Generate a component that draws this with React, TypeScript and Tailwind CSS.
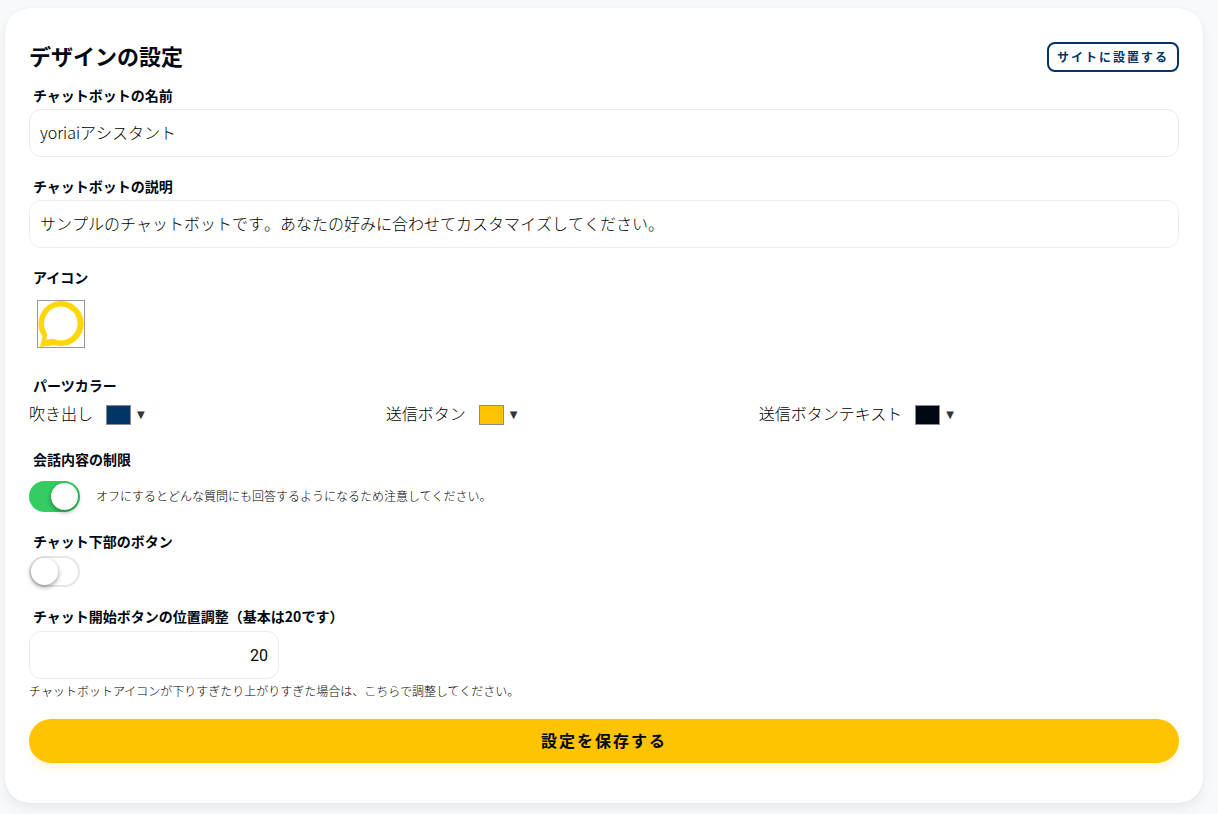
import { useState } from 'react'
import type { ReactNode } from 'react'

const FONT = "font-['Noto_Sans_CJK_JP',sans-serif]"

function Label({ htmlFor, children }: { htmlFor?: string; children: ReactNode }) {
  const className = 'mb-[5px] block pl-1 text-sm leading-[18px] font-bold'
  return htmlFor ? (
    <label htmlFor={htmlFor} className={className}>{children}</label>
  ) : (
    <p className={className}>{children}</p>
  )
}

function TextField({ id, label, initial }: { id: string; label: string; initial: string }) {
  const [value, setValue] = useState(initial)
  return (
    <div>
      <Label htmlFor={id}>{label}</Label>
      <input
        id={id}
        type="text"
        value={value}
        onChange={e => setValue(e.target.value)}
        className="block h-12 w-full rounded-xl border border-[#e9ecef] bg-white px-2.5 pb-0.5 text-base font-light text-black [font-kerning:none] outline-none focus:border-[#003566]"
      />
    </div>
  )
}

function ColorPicker({ id, label, swatch }: { id: string; label: string; swatch: string }) {
  return (
    <div className="flex flex-auto items-start gap-[13px]">
      <span id={id} className="text-base leading-4 font-light text-black">{label}</span>
      <button type="button" aria-labelledby={id} className="flex cursor-pointer items-center gap-1.5">
        <span className={`h-5 w-[25px] border border-[#8c8c8c] ${swatch}`} />
        <span className="font-['DejaVu_Sans',sans-serif] text-[10px] leading-4 text-[#333]">▼</span>
      </button>
    </div>
  )
}

function Toggle({ id, initial }: { id: string; initial: boolean }) {
  const [on, setOn] = useState(initial)
  return (
    <span className="relative inline-flex h-[31px] w-[51px] shrink-0">
      <input
        id={id}
        type="checkbox"
        checked={on}
        onChange={e => setOn(e.target.checked)}
        className="h-full w-full cursor-pointer appearance-none rounded-full border-2 border-[#e6e6e6] bg-white transition-colors checked:border-[#34cd61] checked:bg-[#34cd61]"
      />
      <span
        className={`pointer-events-none absolute top-0.5 h-[27px] w-[27px] rounded-full bg-white shadow-[0_2px_5px_rgba(0,0,0,0.4)] transition-all ${on ? 'left-[22px]' : 'left-0.5'}`}
      />
    </span>
  )
}

function BubbleIcon() {
  return (
    <svg viewBox="0 0 46 46" className="h-full w-full" fill="#ffd60a" fillRule="evenodd" aria-hidden="true">
      <path d="M23 0A22.7 22.5 0 1 1 16 43.9L2 46L4.5 35.3A22.7 22.5 0 0 1 23 0ZM23 5.6A16.9 16.9 0 0 0 8.5 31.2L9 34L8.4 38.8L15.5 37.8A16.9 16.9 0 1 0 23 5.6Z" />
    </svg>
  )
}

export default function App() {
  const [offset, setOffset] = useState('20')

  return (
    <main className={`min-h-screen bg-[#f8f9fa] pt-2 pr-[15px] pb-[11px] pl-[5px] text-[#000814] ${FONT}`}>
      <form
        onSubmit={e => e.preventDefault()}
        className="flex flex-col gap-5 rounded-3xl bg-white px-6 pt-[34px] pb-10 shadow-[0_0_1px_rgba(0,0,0,0.15),0_6px_12px_rgba(0,0,0,0.06)]"
      >
        <div>
          <div className="mb-3.5 flex h-[30px] items-start justify-between">
            <h1 className="text-[22px] leading-[26px] font-bold">デザインの設定</h1>
            <button
              type="button"
              className="h-[30px] cursor-pointer rounded-lg border-2 border-[#003566] px-2 text-xs leading-4 font-bold tracking-[2px] text-[#003566]"
            >
              サイトに設置する
            </button>
          </div>
          <TextField id="bot-name" label="チャットボットの名前" initial="yoriaiアシスタント" />
        </div>

        <TextField
          id="bot-description"
          label="チャットボットの説明"
          initial="サンプルのチャットボットです。あなたの好みに合わせてカスタマイズしてください。"
        />

        <div>
          <Label>アイコン</Label>
          <button
            type="button"
            aria-label="アイコン"
            className="mt-3.5 mb-2 ml-2 block h-12 w-12 cursor-pointer border border-[#999]"
          >
            <BubbleIcon />
          </button>
        </div>

        <div>
          <Label>パーツカラー</Label>
          <div className="mt-[11px] flex items-start gap-4">
            <ColorPicker id="color-bubble" label="吹き出し" swatch="bg-[#003566]" />
            <ColorPicker id="color-send" label="送信ボタン" swatch="bg-[#ffc300]" />
            <ColorPicker id="color-send-text" label="送信ボタンテキスト" swatch="bg-[#000814]" />
          </div>
        </div>

        <div className="mt-[5px]">
          <Label htmlFor="limit">会話内容の制限</Label>
          <div className="mt-[13px] flex items-center gap-4">
            <Toggle id="limit" initial={true} />
            <span className="pb-0.5 text-xs leading-4 font-light text-black">
              オフにするとどんな質問にも回答するようになるため注意してください。
            </span>
          </div>
        </div>

        <div>
          <Label htmlFor="bottom-buttons">チャット下部のボタン</Label>
          <div className="mt-1.5 flex">
            <Toggle id="bottom-buttons" initial={false} />
          </div>
        </div>

        <div>
          <Label htmlFor="offset">チャット開始ボタンの位置調整（基本は20です）</Label>
          <input
            id="offset"
            type="text"
            inputMode="numeric"
            value={offset}
            onChange={e => setOffset(e.target.value)}
            className="mt-1.5 block h-12 w-[250px] rounded-xl border border-[#e9ecef] bg-white px-2.5 text-right font-['Roboto',sans-serif] text-base outline-none focus:border-[#003566]"
          />
          <p className="mt-1 text-xs leading-4 font-light text-black">
            チャットボットアイコンが下りすぎたり上がりすぎた場合は、こちらで調整してください。
          </p>
        </div>

        <button
          type="submit"
          className="h-11 w-full cursor-pointer rounded-full bg-[#ffc300] pb-0.5 text-base font-bold tracking-[2px] shadow-[0_5px_10px_rgba(255,195,0,0.15)]"
        >
          設定を保存する
        </button>
      </form>
    </main>
  )
}
